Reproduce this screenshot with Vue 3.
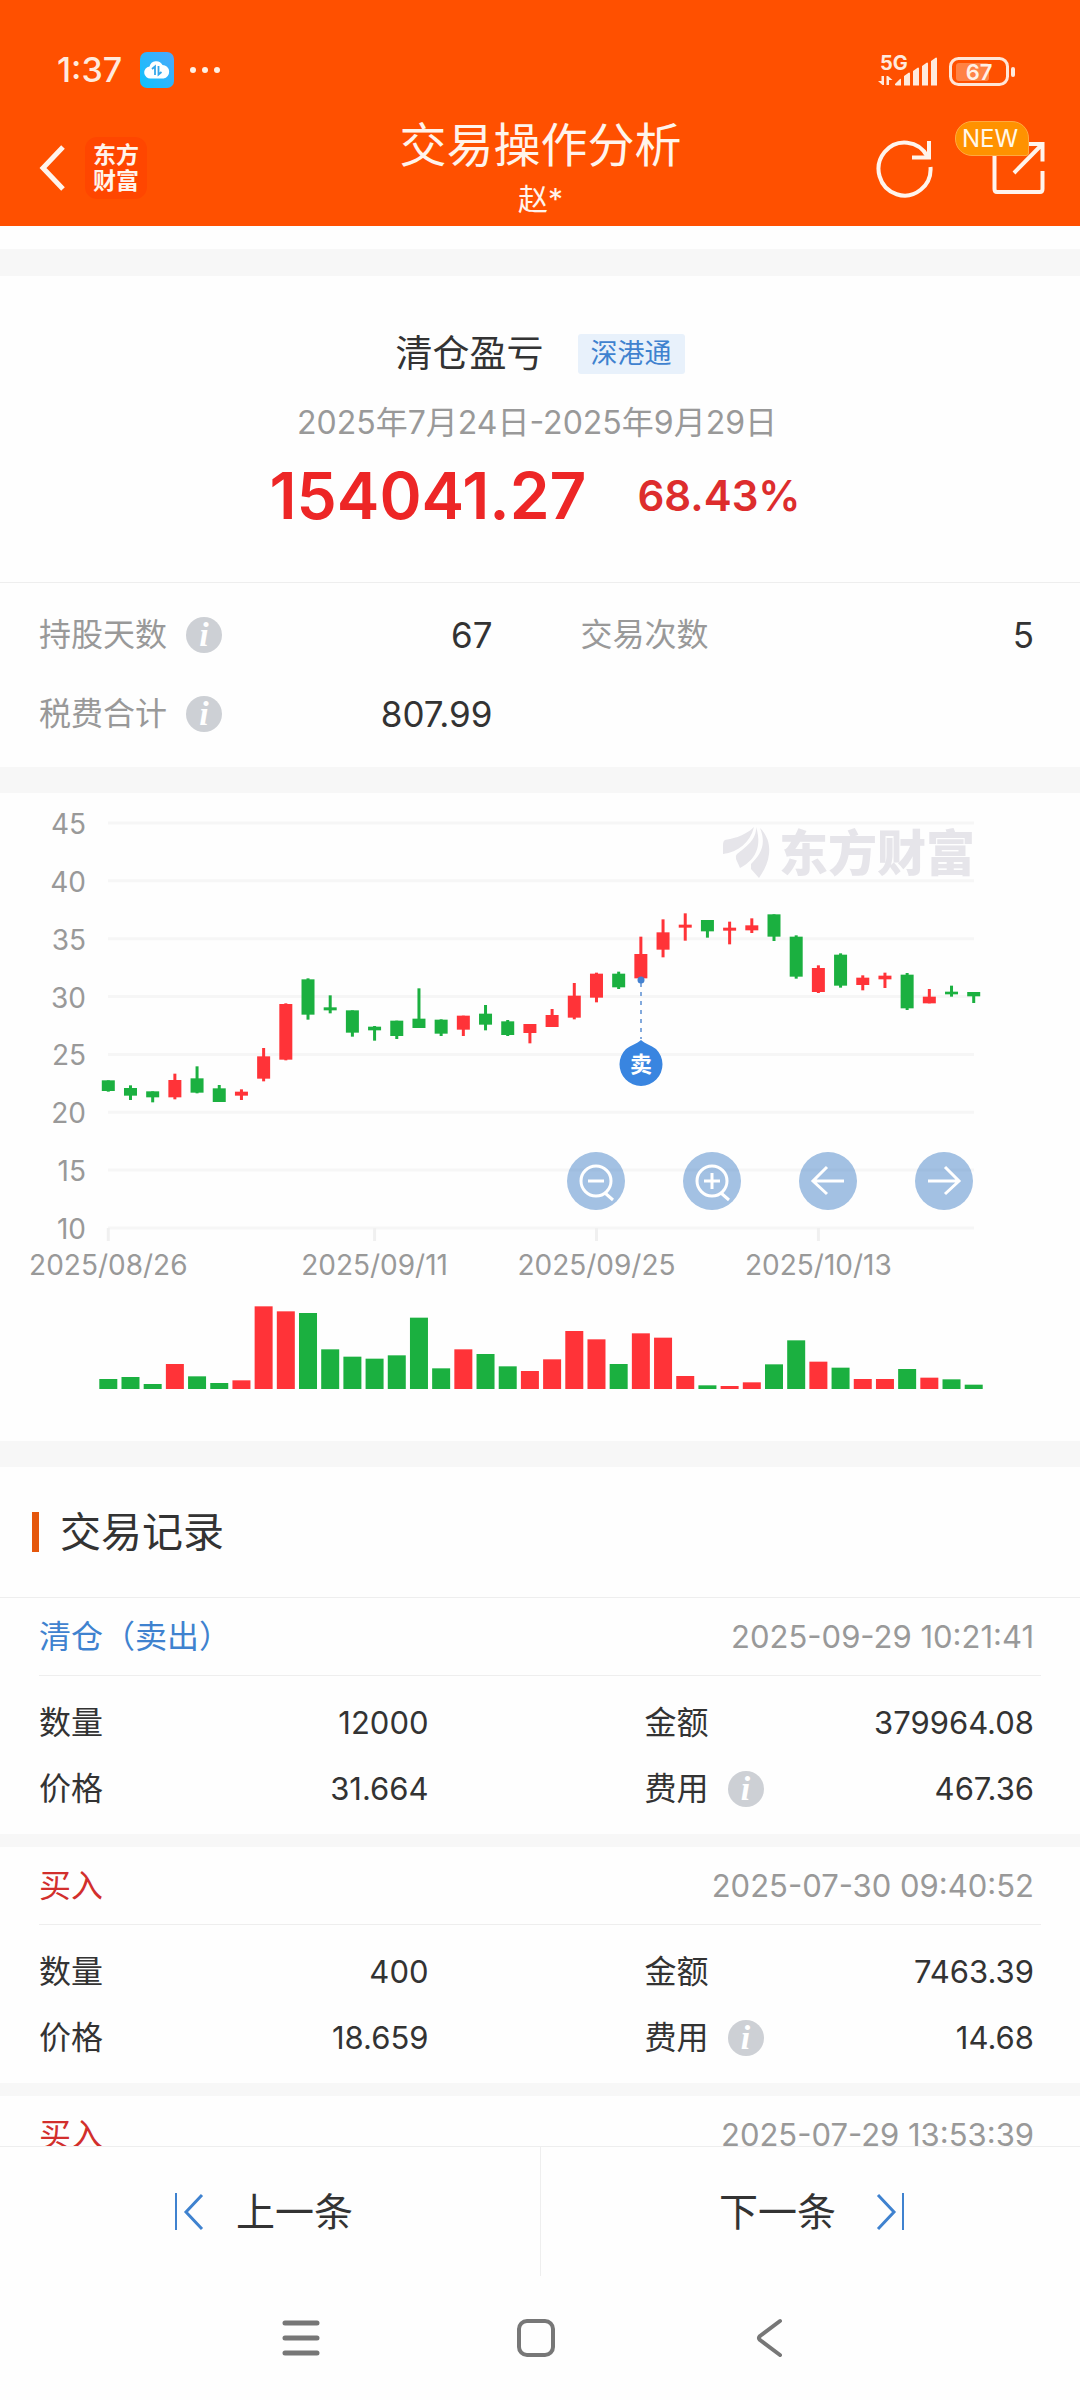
<script setup>
const prices = [45, 40, 35, 30, 25, 20, 15, 10]
const priceY = (p) => 30 + (45 - p) * 11.57
const colX = (i) => 108.3 + i * 22.19
// Candle levels and volumes are stored in thirds of a chart unit.
const level = (v) => v / 3 - 3

// [colour, high, body top, body bottom, low, volume]
const days = [
  ['g', 871, 871, 903, 905, 30], ['g', 886, 894, 917, 930, 36], ['g', 904, 904, 922, 937, 15],
  ['r', 851, 870, 922, 928, 75], ['g', 829, 865, 908, 910, 38], ['g', 885, 895, 936, 936, 18],
  ['r', 898, 905, 917, 930, 26], ['r', 774, 799, 866, 874, 248], ['r', 640, 642, 809, 811, 233],
  ['g', 565, 568, 674, 689, 228], ['g', 616, 652, 661, 670, 119], ['g', 661, 661, 728, 740, 97],
  ['g', 708, 710, 721, 752, 91], ['g', 692, 692, 738, 747, 101], ['g', 595, 686, 714, 714, 214],
  ['g', 688, 689, 731, 738, 62], ['r', 677, 677, 719, 738, 119], ['g', 645, 671, 704, 721, 105],
  ['g', 690, 694, 735, 738, 68], ['r', 702, 702, 729, 760, 54], ['r', 657, 675, 711, 711, 89],
  ['r', 579, 617, 683, 688, 174], ['r', 548, 551, 623, 637, 149], ['g', 545, 551, 592, 597, 75],
  ['r', 440, 492, 565, 565, 167], ['r', 388, 427, 479, 502, 154], ['r', 370, 404, 413, 452, 39],
  ['g', 390, 390, 424, 443, 11], ['r', 395, 413, 422, 463, 9], ['r', 385, 406, 421, 429, 20],
  ['g', 373, 373, 440, 453, 74], ['g', 436, 440, 560, 566, 146], ['r', 526, 534, 606, 609, 82],
  ['g', 490, 494, 587, 593, 64], ['r', 556, 563, 585, 601, 30], ['r', 548, 557, 568, 594, 30],
  ['g', 549, 554, 655, 660, 60], ['r', 597, 620, 640, 640, 34], ['g', 587, 605, 613, 620, 29],
  ['g', 606, 606, 619, 639, 13],
]

const dates = [
  { i: 0, t: '2025/08/26' },
  { i: 12, t: '2025/09/11' },
  { i: 22, t: '2025/09/25' },
  { i: 32, t: '2025/10/13' },
]

const records = [
  { kind: 'sell', name: '清仓（卖出）', time: '2025-09-29 10:21:41', qty: '12000', amount: '379964.08', price: '31.664', fee: '467.36' },
  { kind: 'buy', name: '买入', time: '2025-07-30 09:40:52', qty: '400', amount: '7463.39', price: '18.659', fee: '14.68' },
  { kind: 'buy', name: '买入', time: '2025-07-29 13:53:39' },
]
</script>

<template>
  <div class="app">
    <header class="top">
      <div class="status">
        <span class="clock">1:37</span>
        <svg class="cloud" width="34" height="36" viewBox="0 0 34 36" aria-hidden="true">
          <defs>
            <linearGradient id="sky" x1="0" y1="1" x2="1" y2="0">
              <stop offset="0" stop-color="#0cc3fb" /><stop offset="1" stop-color="#4ea8fb" />
            </linearGradient>
          </defs>
          <rect width="34" height="36" rx="7" fill="url(#sky)" />
          <path d="M11 26.500 a6 6 0 0 1 -1.500 -12 a7 7 0 0 1 13 -1.500 a6.800 6.800 0 0 1 1 13.500z" fill="#fff" />
          <path d="M12 17 l3 -2.500 v8.500 M18.500 14 v8.500 l3 -2.500" fill="none" stroke="#35a7ea" stroke-width="1.800" />
        </svg>
        <svg class="dots" width="32" height="8" viewBox="0 0 32 8" fill="#ffefe4" aria-hidden="true">
          <circle cx="4" cy="4" r="3" /><circle cx="16" cy="4" r="3" /><circle cx="28" cy="4" r="3" />
        </svg>
        <svg class="signal" width="140" height="34" viewBox="0 0 140 34" aria-hidden="true">
          <g fill="#ffeadd">
            <text x="2" y="17" class="net">5G</text>
            <path d="M6 23v9h-1.500l-4.500 -4h3.500v-5z M8.500 32v-9h1.500l4.500 4h-3.500v5z" />
            <path d="M17 32v-1l5 -5q1 -1 1 1v5.500h-5z" />
            <path d="M26 23l5 -3.500q1 0 1 1v12h-6z M35 18l5 -3.500q1 0 1 1v17h-6z M44 13l5 -3.500q1 0 1 1v22h-6z M53 8l5 -3.500q1 0 1 1v27h-6z" />
            <rect x="133" y="14" width="4" height="10" rx="2" />
          </g>
          <rect x="72.500" y="5.500" width="57" height="26" rx="8" fill="none" stroke="#ffe6d8" stroke-width="3" />
          <rect x="78" y="10" width="33" height="18" rx="3" fill="#ff8244" />
          <text x="101" y="27" class="charge">67</text>
        </svg>
      </div>
      <div class="bar">
        <div class="side">
          <button class="plain" aria-label="返回">
            <svg width="28" height="48" viewBox="0 0 28 48"><path d="M24 3 L4 24 L24 45" fill="none" stroke="#fff4ec" stroke-width="5" /></svg>
          </button>
          <a class="brand" href="#">东方<br />财富</a>
        </div>
        <div class="titles">
          <h1>交易操作分析</h1>
          <p>赵*</p>
        </div>
        <div class="side end">
          <button class="plain" aria-label="刷新">
            <svg width="60" height="60" viewBox="0 0 60 60" fill="none" stroke="#fff4ec" stroke-width="4">
              <path d="M55.500 29 A26 26.500 0 1 1 52.500 18.500" /><path d="M54 3 V19.500 H37" />
            </svg>
          </button>
          <button class="plain share" aria-label="分享">
            <svg width="54" height="54" viewBox="0 0 54 54" fill="none" stroke="#fff4ec" stroke-width="4">
              <path d="M2.500 10 V48 Q2.500 51 5 51 H48 Q50.500 51 50.500 48 V30" /><path d="M34 3 H50.500 V20.500 M50.500 3 L22 32" />
            </svg>
            <span class="new">NEW</span>
          </button>
        </div>
      </div>
    </header>

    <main class="scroll">
      <section class="summary">
        <div class="name"><h2>清仓盈亏</h2><span class="tag">深港通</span></div>
        <p class="range">2025年7月24日-2025年9月29日</p>
        <div class="profit"><strong class="gain">154041.27</strong><strong class="rate">68.43%</strong></div>
        <dl class="stats">
          <div>
            <dt>持股天数</dt>
            <button class="plain info" aria-label="持股天数说明"><i>i</i></button>
            <dd>67</dd>
          </div>
          <div><dt>交易次数</dt><dd>5</dd></div>
          <div>
            <dt>税费合计</dt>
            <button class="plain info" aria-label="税费合计说明"><i>i</i></button>
            <dd>807.99</dd>
          </div>
        </dl>
      </section>

      <section class="chart">
        <svg class="plot" viewBox="0 0 1080 648" role="img" aria-label="K线图">
          <g stroke="#f6f6f6" stroke-width="3">
            <line v-for="p in prices" :key="p" x1="108" x2="974" :y1="priceY(p)" :y2="priceY(p)" />
            <line v-for="d in dates" :key="d.t" :x1="colX(d.i)" :x2="colX(d.i)" y1="435" y2="448" stroke="#f0f0f0" />
          </g>
          <g fill="#e6e5ea">
            <path d="M754 34 C744 44 730 46 725 47 Q723 48 723 52 V61 C738 59 750 50 754 34z" />
            <path d="M756 34 C757 46 746 54 737 61 Q735 63 736 66 L740 75 C750 70 764 58 756 34z" />
            <path d="M760 35 C768 43 770 52 769 61 C768 71 763 79 759 85 L751 76 V71 C760 62 767 52 760 35z" />
            <text x="779" y="78" class="mark">东方财富</text>
          </g>
          <text v-for="p in prices" :key="'p' + p" x="86" :y="priceY(p) + 11" class="axis right">{{ p }}</text>
          <text v-for="d in dates" :key="'d' + d.t" :x="colX(d.i)" y="482" class="axis mid">{{ d.t }}</text>
          <g v-for="(d, i) in days" :key="i" :class="d[0] === 'r' ? 'up' : 'down'">
            <rect :x="colX(i) - 1.5" :y="level(d[1])" width="3" :height="(d[4] - d[1]) / 3" />
            <rect :x="colX(i) - 6.5" :y="level(d[2])" width="13" :height="(d[3] - d[2]) / 3" />
            <rect :x="colX(i) - 9" :y="596 - d[5] / 3" width="18" :height="d[5] / 3" />
          </g>
          <line x1="641" x2="641" y1="190" y2="246" stroke="#82a9dc" stroke-width="2" stroke-dasharray="4 5" />
          <circle cx="641" cy="187" r="3.500" fill="#4482d0" />
          <path d="M641 247 C645 251 651 252 656 256 A21.500 21.500 0 1 1 626 256 C631 252 637 251 641 247z" fill="#3985e0" />
          <text x="641" y="279" class="pin">卖</text>
        </svg>
        <div class="tools">
          <button class="tool" aria-label="缩小">
            <svg viewBox="0 0 58 58"><circle cx="29" cy="29" r="15" /><path d="M21 29H37M38 41L46 48" /></svg>
          </button>
          <button class="tool" aria-label="放大">
            <svg viewBox="0 0 58 58"><circle cx="29" cy="29" r="15" /><path d="M21 29H37M29 21V37M38 41L46 48" /></svg>
          </button>
          <button class="tool" aria-label="向左">
            <svg viewBox="0 0 58 58"><path d="M45 29H14M28 15L14 29L28 42" /></svg>
          </button>
          <button class="tool" aria-label="向右">
            <svg viewBox="0 0 58 58"><path d="M13 29H44M30 15L44 29L30 42" /></svg>
          </button>
        </div>
      </section>

      <section class="history">
        <h2 class="heading">交易记录</h2>
        <article v-for="r in records" :key="r.time" class="record">
          <div class="head">
            <h3 :class="r.kind">{{ r.name }}</h3>
            <time>{{ r.time }}</time>
          </div>
          <dl v-if="r.qty" class="facts">
            <div><dt>数量</dt><dd>{{ r.qty }}</dd></div>
            <div><dt>金额</dt><dd>{{ r.amount }}</dd></div>
            <div><dt>价格</dt><dd>{{ r.price }}</dd></div>
            <div>
              <dt>费用</dt>
              <button class="plain info" aria-label="费用说明"><i>i</i></button>
              <dd>{{ r.fee }}</dd>
            </div>
          </dl>
        </article>
      </section>
    </main>

    <footer>
      <div class="pager">
        <button class="plain prev">
          <svg width="30" height="40" viewBox="0 0 30 40" fill="none" stroke="#3f82cf" stroke-width="3"><path d="M2 1V38" stroke-width="2" /><path d="M28 3L12 20L28 37" /></svg>
          上一条
        </button>
        <button class="plain next">
          下一条
          <svg width="30" height="40" viewBox="0 0 30 40" fill="none" stroke="#3f82cf" stroke-width="3"><path d="M27 1V38" stroke-width="2" /><path d="M2 3L18 20L2 37" /></svg>
        </button>
      </div>
      <nav class="system">
        <button class="plain" aria-label="最近任务">
          <svg width="40" height="40" viewBox="0 0 40 40" stroke="#777" stroke-width="5" stroke-linecap="round"><path d="M4 5H36M4 20H36M4 35H36" /></svg>
        </button>
        <button class="plain" aria-label="主屏幕">
          <svg width="40" height="40" viewBox="0 0 40 40" fill="none" stroke="#777" stroke-width="4"><rect x="3" y="3" width="34" height="34" rx="8" /></svg>
        </button>
        <button class="plain" aria-label="返回上一级">
          <svg width="40" height="40" viewBox="0 0 40 40" fill="none" stroke="#777" stroke-width="4" stroke-linecap="round" stroke-linejoin="round"><path d="M30 3L10 18Q8 20 10 22L30 37" /></svg>
        </button>
      </nav>
    </footer>
  </div>
</template>

<style>
body {
  margin: 0;
  background: #fff;
}
</style>

<style scoped>
.app {
  display: flex;
  flex-direction: column;
  height: 100vh;
  overflow: hidden;
  color: #333;
  background: #fefefe;
  font-family: Inter, "Noto Sans CJK SC", sans-serif;
  font-size: 32px;
  line-height: 40px;
}
h1, h2, h3, p, dl, dd {
  margin: 0;
  font-weight: 400;
}
.plain {
  display: flex;
  align-items: center;
  padding: 0;
  border: 0;
  background: none;
  color: inherit;
  font: inherit;
}
svg {
  display: block;
}

.top {
  flex: none;
  background: #ff5000;
  color: #fff4ec;
}
.status {
  display: flex;
  align-items: center;
  height: 70px;
  padding: 35px 62px 0 57px;
}
.clock {
  color: #ffeadd;
  font-size: 34px;
  font-weight: 500;
}
.cloud {
  margin-left: 18px;
}
.dots {
  margin-left: 15px;
}
.signal {
  margin-left: auto;
}
.net {
  font-size: 20px;
  font-weight: 700;
}
.charge {
  fill: #fff0e6;
  font-size: 22px;
  font-weight: 600;
  text-anchor: middle;
}
.bar {
  display: flex;
  height: 121px;
}
.side {
  display: flex;
  align-items: center;
  box-sizing: border-box;
  flex: 1 1 0;
  gap: 18px;
  padding: 4px 0 0 39px;
}
.end {
  justify-content: flex-end;
  gap: 57px;
  padding: 4px 34px 0 0;
}
.brand {
  width: 62px;
  padding: 5px 0;
  border-radius: 12px;
  background: #ff4600;
  color: #fff4ec;
  font-size: 23px;
  font-weight: 700;
  line-height: 26px;
  text-align: center;
  text-decoration: none;
}
.titles {
  padding: 8px 4px 0 0;
  text-align: center;
}
h1 {
  font-size: 47px;
  line-height: 64px;
}
.titles p {
  font-size: 30px;
  line-height: 44px;
}
.share {
  position: relative;
}
.new {
  position: absolute;
  top: -20px;
  left: -37px;
  box-sizing: border-box;
  width: 74px;
  padding-right: 4px;
  border: 1px solid #ffa940;
  border-radius: 17px 17px 3px 17px;
  background: #ff9200;
  color: #fff8ea;
  font-size: 24px;
  line-height: 33px;
  text-align: center;
}

.scroll {
  flex: 1;
  min-height: 0;
  overflow-y: auto;
  scrollbar-width: none;
}
.summary {
  margin-top: 23px;
  border-top: 27px solid #f7f7f7;
  border-bottom: 26px solid #f7f7f7;
}
.name {
  display: flex;
  justify-content: center;
  align-items: center;
  gap: 34px;
  padding-top: 58px;
}
.name h2 {
  font-size: 37px;
}
.tag {
  padding: 0 13px;
  border-radius: 3px;
  background: #e8f1fb;
  color: #3f82cf;
  font-size: 27px;
}
.range {
  margin-top: 29px;
  padding-right: 6px;
  color: #999;
  text-align: center;
}
.profit {
  display: flex;
  justify-content: center;
  align-items: center;
  gap: 51px;
  padding: 13px 10px 46px 0;
  border-bottom: 1px solid #eee;
  line-height: 80px;
}
.gain {
  color: #ed2626;
  font-size: 64px;
  font-weight: 600;
}
.rate {
  color: #dd2d2d;
  font-size: 42px;
  font-weight: 600;
}
.stats, .facts {
  display: grid;
  grid-template-columns: 1fr 1fr;
}
.stats {
  gap: 39px 88px;
  padding: 32px 46px 33px 39px;
}
.stats > div, .facts > div {
  display: flex;
  align-items: center;
}
.stats dt {
  color: #999;
}
.stats dd {
  font-size: 35px;
}
dd {
  margin-left: auto;
}
.info {
  justify-content: center;
  width: 36px;
  height: 36px;
  margin-left: 19px;
  border-radius: 50%;
  background: #cdd0d5;
  color: #fff;
  font-family: "Liberation Serif", serif;
  font-size: 34px;
  font-weight: 700;
  line-height: 36px;
}

.chart {
  position: relative;
  border-bottom: 26px solid #f7f7f7;
}
.plot {
  width: 100%;
}
.axis {
  fill: #999;
  font-size: 28px;
}
.right {
  text-anchor: end;
}
.mid, .pin {
  text-anchor: middle;
}
.mark {
  font-family: "Noto Sans CJK SC", sans-serif;
  font-size: 49px;
  font-weight: 900;
}
.pin {
  fill: #fff;
  font-size: 22px;
  font-weight: 700;
}
.up {
  fill: #ff3338;
}
.down {
  fill: #1bb040;
}
.tools {
  position: absolute;
  top: 359px;
  right: 107px;
  display: flex;
  gap: 58px;
}
.tool {
  width: 58px;
  height: 58px;
  padding: 0;
  border: 0;
  border-radius: 50%;
  background: rgba(72, 132, 200, 0.5);
}
.tool svg {
  fill: none;
  stroke: #fff;
  stroke-width: 3;
}

.heading {
  display: flex;
  align-items: center;
  gap: 21px;
  padding: 45px 32px;
  font-size: 41px;
}
.heading::before {
  width: 7px;
  height: 40px;
  background: #e5570c;
  content: "";
}
.record {
  border-bottom: 13px solid #f7f7f7;
}
.heading + .record {
  border-top: 1px solid #eee;
}
.head {
  display: flex;
  justify-content: space-between;
  align-items: center;
  margin: 0 39px;
  padding: 19px 7px 18px 0;
  border-bottom: 1px solid #eee;
}
h3 {
  font-size: 32px;
}
.sell {
  color: #3f82cf;
}
.buy {
  color: #d22f2c;
}
.head time {
  color: #999;
  font-size: 31px;
}
.facts {
  gap: 26px 216px;
  padding: 27px 46px 25px 39px;
}
.facts dd {
  font-size: 31px;
}

footer {
  flex: none;
  border-top: 1px solid #eee;
  background: #fefefe;
}
.pager {
  display: flex;
}
.pager button {
  flex: 1;
  height: 129px;
  gap: 32px;
  font-size: 39px;
}
.prev {
  padding-left: 174px;
  border-right: 1px solid #eee;
}
.pager .next {
  justify-content: flex-end;
  gap: 40px;
  padding-right: 174px;
}
.system {
  display: flex;
  justify-content: space-between;
  padding: 42px 290px 42px 281px;
}
</style>
